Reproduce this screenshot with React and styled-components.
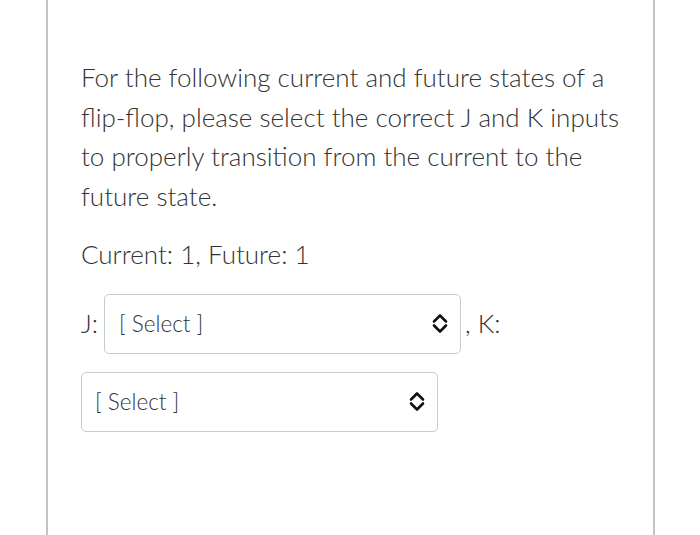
import React from "react";
import styled, { createGlobalStyle } from "styled-components";

const Global = createGlobalStyle`
  html, body { margin: 0; padding: 0; background: #fff; }
  body { font-family: Lato, "Open Sans", sans-serif; color: #333; }
`;

const Page = styled.div`
  box-sizing: border-box;
  margin-left: 46px;
  width: 609px;
  height: 535px;
  border-left: 2px solid #c4c4c4;
  border-right: 2px solid #c4c4c4;
  padding: 58px 20px 0 33px;
  overflow: hidden;
`;

const Para = styled.p`
  margin: 0 0 19px;
  font-size: 26px;
  font-weight: 300;
  line-height: 39.5px;
`;

const Row = styled.div`
  display: flex;
  flex-wrap: wrap;
  align-items: center;
  row-gap: 18px;
  font-size: 26px;
  font-weight: 300;
  line-height: 39.5px;
`;

const Label = styled.span`
  margin-left: ${(p) => p.$ml || 0}px;
  margin-right: ${(p) => p.$mr || 0}px;
`;

const SelectBox = styled.div`
  box-sizing: border-box;
  width: 357px;
  height: 60px;
  display: flex;
  align-items: center;
  justify-content: space-between;
  padding: 0 12px 0 ${(p) => p.$pl || 14}px;
  border: 1px solid #c7cdd1;
  border-radius: 5px;
  background: #fff;
  font-size: 22.5px;
  font-weight: 300;
  color: #333;
`;

const Chevron = () => (
  <svg width="16" height="21" viewBox="0 0 16 21" fill="none">
    <path d="M2 8.5 L8 2.5 L14 8.5" stroke="#111" strokeWidth="2.6" strokeLinecap="round" strokeLinejoin="round" />
    <path d="M2 12.5 L8 18.5 L14 12.5" stroke="#111" strokeWidth="2.6" strokeLinecap="round" strokeLinejoin="round" />
  </svg>
);

const Select = ({ pl }) => (
  <SelectBox $pl={pl}>
    <span>[ Select ]</span>
    <Chevron />
  </SelectBox>
);

export default function App() {
  return (
    <>
      <Global />
      <Page>
        <Para>
          For the following current and future states of a flip-flop, please select the correct J and K inputs to
          properly transition from the current to the future state.
        </Para>
        <Para>Current: 1, Future: 1</Para>
        <Row>
          <Label $mr={6}>J:</Label>
          <Select pl={14} />
          <Label $ml={4}>, K:</Label>
          <Select pl={13} />
        </Row>
      </Page>
    </>
  );
}
